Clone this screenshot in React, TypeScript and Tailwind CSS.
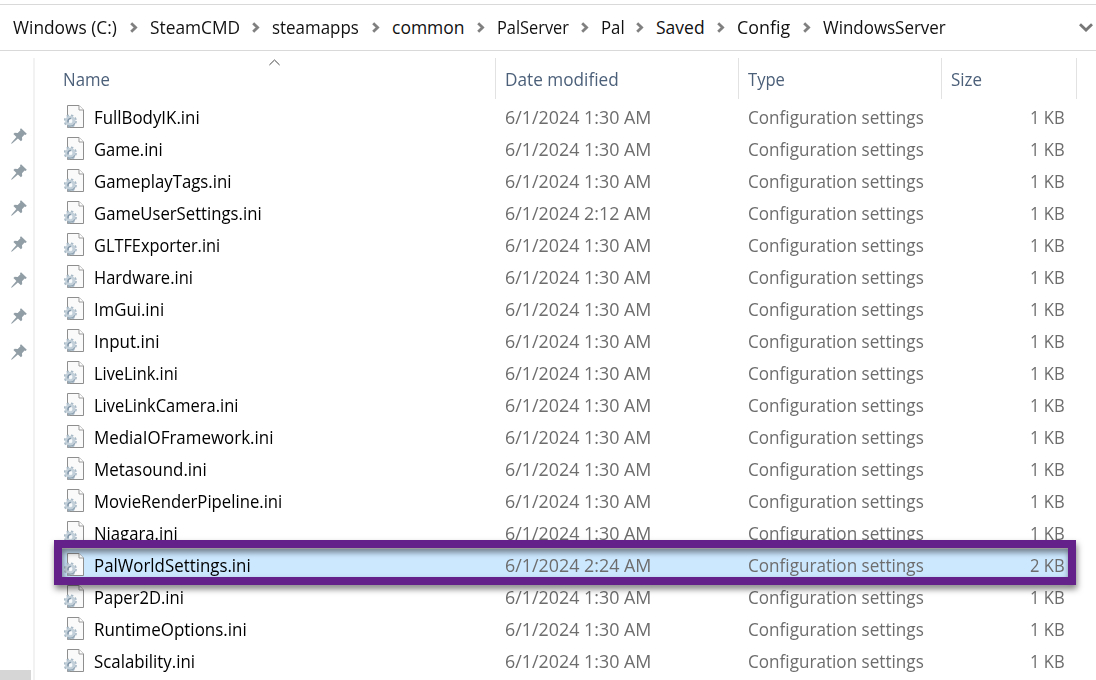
import { useLayoutEffect, useRef, useState } from "react";

const crumbs = [
  { label: "Windows (C:)", text: 104, cell: "w-[137px]" },
  { label: "SteamCMD", text: 90, cell: "w-[122px]" },
  { label: "steamapps", text: 87, cell: "w-[120px]" },
  { label: "common", text: 73, cell: "w-[105px]" },
  { label: "PalServer", text: 72, cell: "w-[104px]" },
  { label: "Pal", text: 24, cell: "w-[55px]" },
  { label: "Saved", text: 49, cell: "w-[81px]" },
  { label: "Config", text: 53, cell: "w-[86px]" },
  { label: "WindowsServer", text: 123, cell: "w-[137px]" },
];

const files = [
  { name: "FullBodyIK.ini", width: 106 },
  { name: "Game.ini", width: 69 },
  { name: "GameplayTags.ini", width: 137 },
  { name: "GameUserSettings.ini", width: 168, date: "6/1/2024 2:12 AM" },
  { name: "GLTFExporter.ini", width: 126 },
  { name: "Hardware.ini", width: 99 },
  { name: "ImGui.ini", width: 70 },
  { name: "Input.ini", width: 65 },
  { name: "LiveLink.ini", width: 84 },
  { name: "LiveLinkCamera.ini", width: 144 },
  { name: "MediaIOFramework.ini", width: 179 },
  { name: "Metasound.ini", width: 113 },
  { name: "MovieRenderPipeline.ini", width: 188 },
  { name: "Niagara.ini", width: 84 },
  { name: "PalWorldSettings.ini", width: 157, date: "6/1/2024 2:24 AM", size: "2 KB", selected: true },
  { name: "Paper2D.ini", width: 90 },
  { name: "RuntimeOptions.ini", width: 153 },
  { name: "Scalability.ini", width: 101 },
];

// Condenses a label horizontally so that it fills the given width.
function Fit({ text, width }: { text: string; width: number }) {
  const ref = useRef<HTMLSpanElement>(null);
  const [scale, setScale] = useState(1);
  useLayoutEffect(() => {
    if (ref.current) setScale(width / ref.current.offsetWidth);
  }, [text, width]);
  return (
    <span className="block shrink-0" style={{ width }}>
      <span ref={ref} className="inline-block origin-left whitespace-nowrap" style={{ transform: `scaleX(${scale})` }}>
        {text}
      </span>
    </span>
  );
}

function Chevron() {
  return (
    <svg className="mr-3 mt-px h-[11px] w-2 shrink-0" viewBox="0 0 8 11" fill="none" stroke="#808080" strokeWidth="2.8">
      <path d="M1.2 1.2 5.6 5.5 1.2 9.8" />
    </svg>
  );
}

function Pin() {
  return (
    <svg className="size-4" viewBox="0 0 16 16" fill="#929ea6">
      <path d="M10 .2 15.8 5.8 14.6 7 13.6 6.6 11 9.3 11.2 12 9.9 13.3 6.9 10.4 1.4 15.2.4 15.7.1 15.4.7 14.4 5.4 8.9 2.4 5.9 3.7 4.7 6.7 5 9.4 2.3 9 1.3Z" />
    </svg>
  );
}

function IniIcon() {
  return (
    <svg className="h-[24px] w-5 shrink-0" viewBox="0 0 20 24" fill="none">
      <path d="M3.5.5H15L19.5 5V22.5H3.5Z" fill="#fafafa" stroke="#8e8e8e" />
      <path d="M15 .5V5H19.5" fill="#fff" stroke="#9b9b9b" />
      <circle cx="6.3" cy="16" r="5.6" stroke="#a9bac7" strokeWidth="2" strokeDasharray="2.3 2.1" />
      <circle cx="6.3" cy="16" r="3.7" fill="#eef2f5" stroke="#c3d0da" strokeWidth="3" />
      <path d="M6.9 13.4a2.8 2.8 0 0 0-2.6 4.1" stroke="#7d93a5" strokeWidth="1.5" />
      <path d="M4 20.6a5.4 5.4 0 0 0 7-2.4" stroke="#8fa4b4" strokeWidth="1.3" />
      <circle cx="6.6" cy="16" r="1.5" fill="#f8fafb" />
    </svg>
  );
}

export default function App() {
  return (
    <div className="flex h-[680px] w-[1096px] flex-col overflow-hidden bg-white pt-1 font-['Open_Sans','Noto_Sans',sans-serif] text-[17.5px] leading-6 text-[#111]">
      <nav className="flex h-[47px] shrink-0 items-center border-y border-[#d9d9d9] pb-px pl-[13px]">
        {crumbs.map((c, i) => (
          <div key={c.label} className={`flex shrink-0 items-center justify-between ${c.cell}`}>
            <Fit text={c.label} width={c.text} />
            {i < crumbs.length - 1 && <Chevron />}
          </div>
        ))}
        <svg className="ml-auto mr-[3px] mt-px h-[9px] w-[14px]" viewBox="0 0 14 9" fill="none" stroke="#777" strokeWidth="2.8">
          <path d="M1 1.3 7 7.1 13 1.3" />
        </svg>
      </nav>

      <div className="flex min-h-0 grow">
        <aside className="mt-[7px] flex w-[35px] shrink-0 flex-col border-r-2 border-[#f2f2f2]">
          <div className="flex grow flex-col gap-5 pl-[11px] pt-[70px]">
            {[0, 1, 2, 3, 4, 5, 6].map((n) => (
              <Pin key={n} />
            ))}
          </div>
          <div className="h-[10px] w-[31px] shrink-0 bg-[#d6d6d6]" />
        </aside>

        <main className="relative flex grow flex-col pt-[7px]">
          <header className="flex h-[43px] shrink-0 pb-0.5 text-[#4c607a]">
            <div className="flex h-[41px] w-[461px] border-r border-[#e2e2e2] pl-[28px] pt-[9px]">
              <Fit text="Name" width={47} />
              <svg className="-mt-[8px] ml-[159px] h-[7px] w-[11px]" viewBox="0 0 11 7" fill="none" stroke="#444">
                <path d="M.4 6 5.5 1 10.6 6" />
              </svg>
            </div>
            <div className="h-[41px] w-[243px] border-r border-[#e2e2e2] pl-[9px] pt-[9px]">
              <Fit text="Date modified" width={114} />
            </div>
            <div className="h-[41px] w-[203px] border-r border-[#e2e2e2] pl-[9px] pt-[9px]">
              <Fit text="Type" width={37} />
            </div>
            <div className="h-[41px] w-[135px] border-r border-[#e2e2e2] pl-[9px] pt-[9px]">
              <Fit text="Size" width={31} />
            </div>
          </header>

          {files.map((f) => (
            <div
              key={f.name}
              className={`ml-[26px] flex h-8 w-[1008px] shrink-0 items-center pl-[3px] text-[#6d6d6d] ${f.selected ? "bg-[#cce8ff]" : ""}`}
            >
              <IniIcon />
              <div className="ml-[10px] w-[411px] text-black">
                <Fit text={f.name} width={f.width} />
              </div>
              <div className="w-[243px]">
                <Fit text={f.date ?? "6/1/2024 1:30 AM"} width={146} />
              </div>
              <div className="w-[282px]">
                <Fit text="Configuration settings" width={176} />
              </div>
              <Fit text={f.size ?? "1 KB"} width={35} />
            </div>
          ))}

          <div className="absolute left-[19px] top-[489px] h-[45px] w-[1022px] border-8 border-[#642189] drop-shadow-[1px_4px_3px_rgba(0,0,0,0.5)]" />
        </main>
      </div>
    </div>
  );
}
